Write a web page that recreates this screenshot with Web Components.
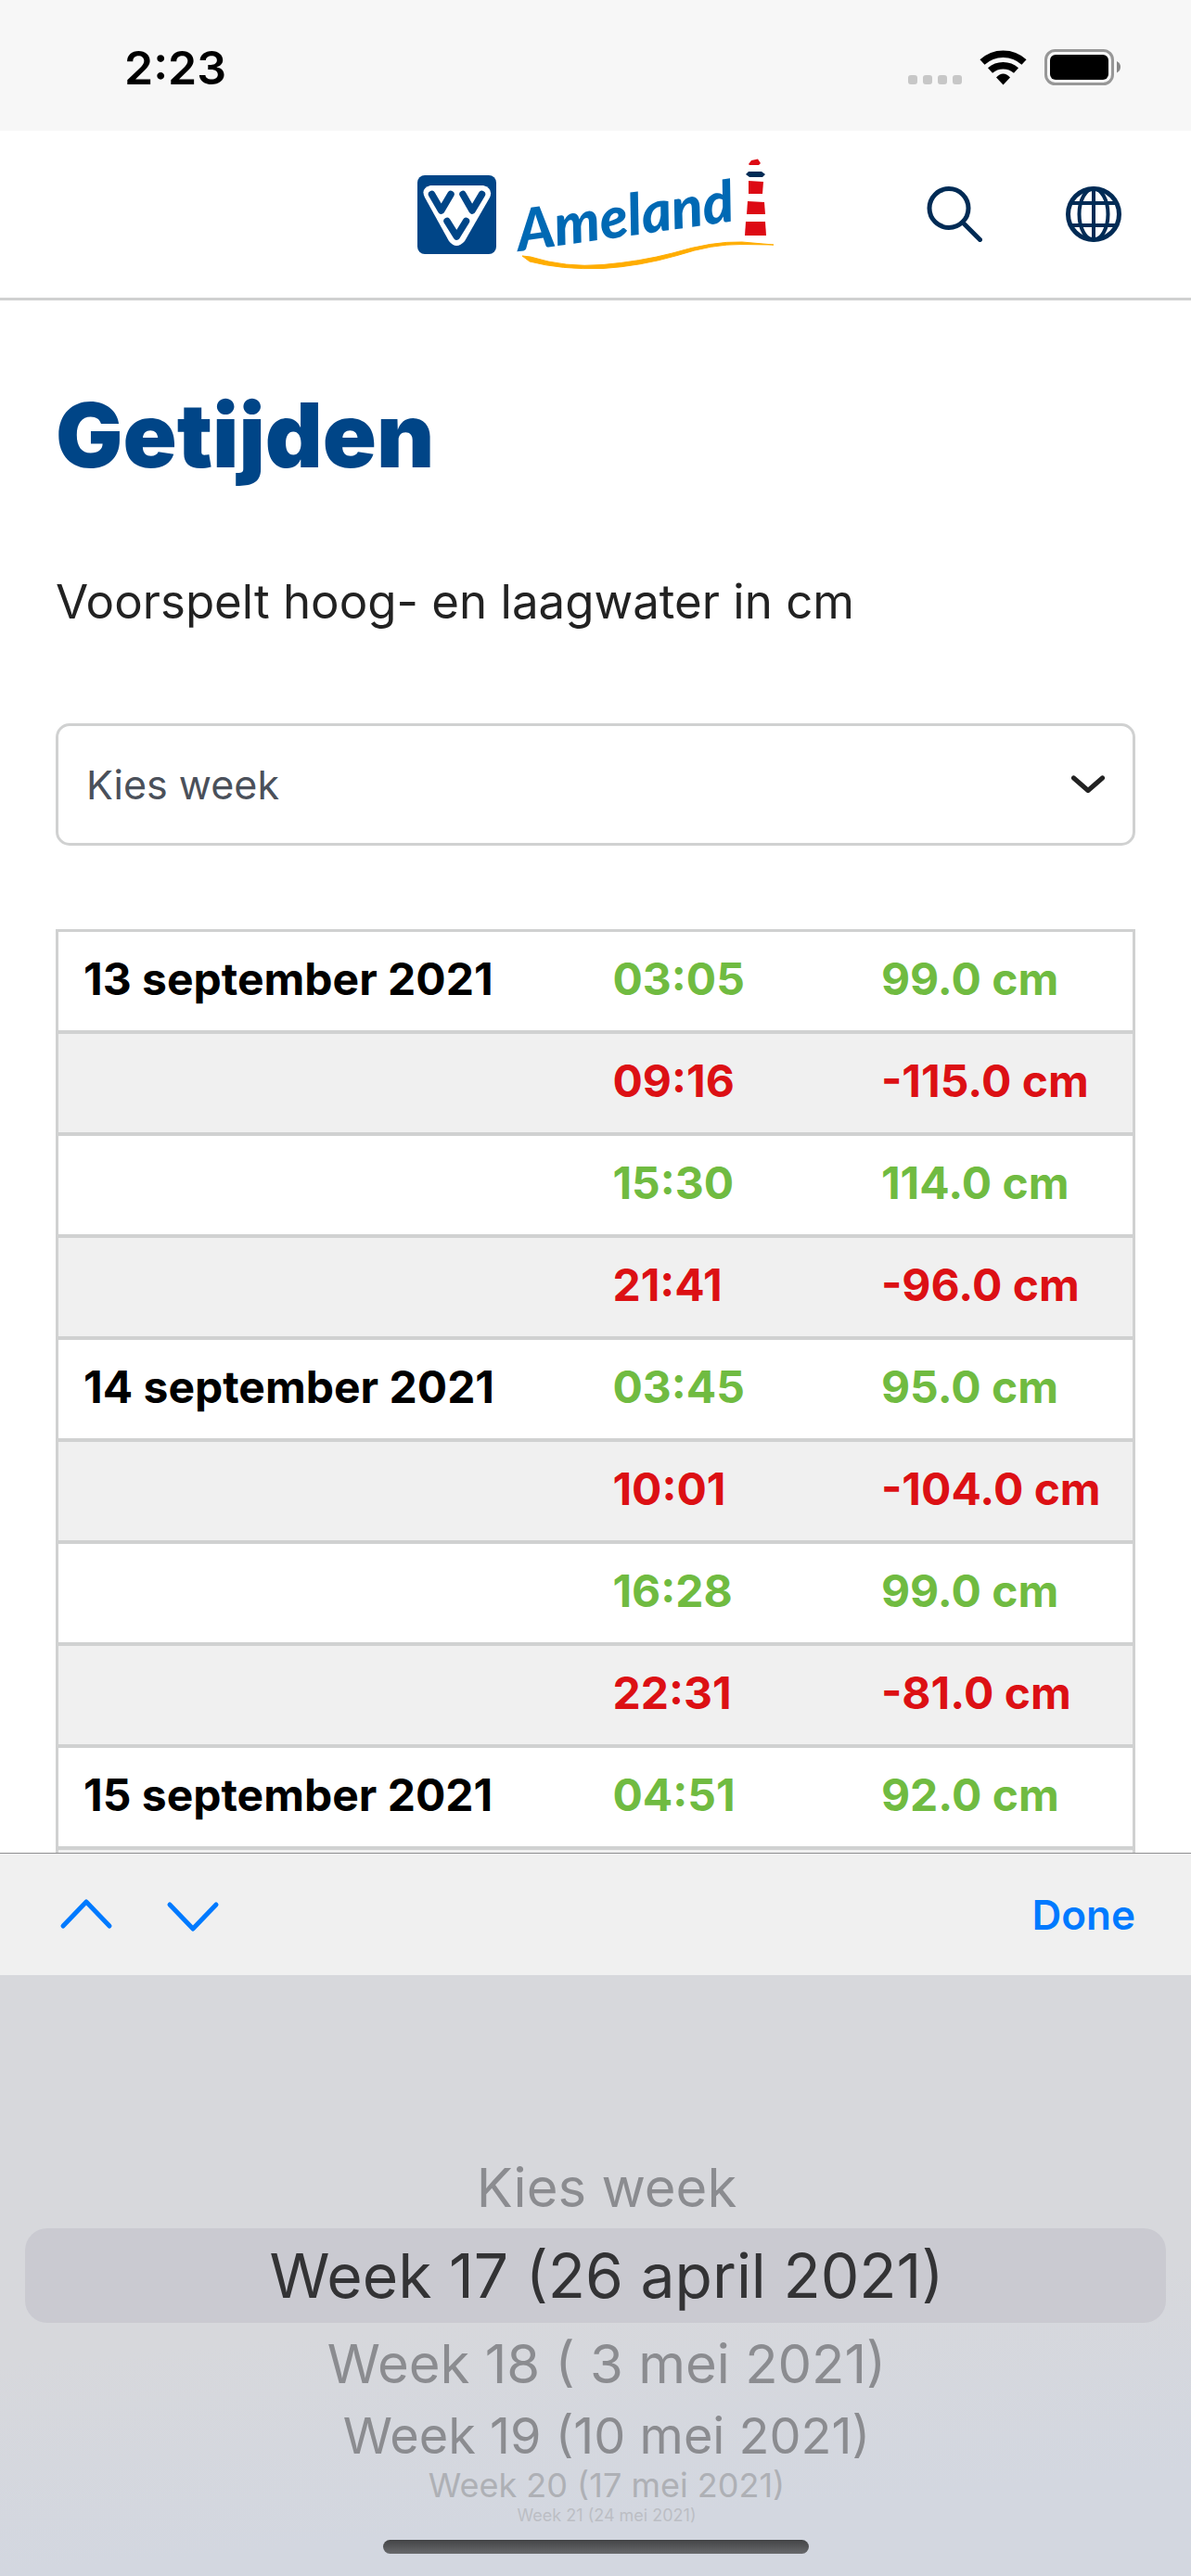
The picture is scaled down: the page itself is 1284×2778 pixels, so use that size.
<!DOCTYPE html>
<html lang="nl">
<head>
<meta charset="utf-8">
<meta name="viewport" content="width=device-width, initial-scale=1">
<title>Getijden</title>
<style>
  html, body { margin: 0; height: 100%; }
  body {
    background: #fff; color: #222;
    font-family: Inter, "Liberation Sans", sans-serif;
    --blue: #004587; --navy: #002b55; --line: #d0d1d1; --ios: #007aff;
    --high: #70bb41; --low: #dc1014; --gutter: 60px;
  }
</style>
</head>
<body>
<tide-app></tide-app>

<script>
const define = (name, html, setup) => {
  const template = document.createElement('template');
  template.innerHTML = html;
  customElements.define(name, class extends HTMLElement {
    constructor() {
      super();
      this.attachShadow({ mode: 'open' }).append(template.content.cloneNode(true));
      if (setup) setup(this.shadowRoot, this);
    }
  });
};

define('status-bar', `
  <style>
    :host { display: flex; justify-content: space-between; align-items: center; height: 141px;
      box-sizing: border-box; padding: 4px 76px 0 134px; background: #f7f7f7; color: #000; }
    time { font-size: 50px; line-height: 60px; font-weight: 600; }
    svg { display: block; }
  </style>
  <time>2:23</time>
  <svg width="229" height="40" viewBox="979 53 229 40" aria-hidden="true">
    <g fill="#c7c7c7"><rect x="979" y="81" width="10" height="10" rx="3"/><rect x="995" y="81" width="10" height="10" rx="3"/><rect x="1011" y="81" width="10" height="10" rx="3"/><rect x="1027" y="81" width="10" height="10" rx="3"/></g>
    <g fill="none" stroke="#000" stroke-width="7.5">
      <path d="M1059 67 A33 33 0 0 1 1104 67"/>
      <path d="M1067.500 76 A21 21 0 0 1 1095.500 76"/>
    </g>
    <path d="M1074 83.500 Q1081.500 75.500 1089 83.500 L1081.500 91.500Z"/>
    <rect x="1127.500" y="54.500" width="72" height="36" rx="10" fill="none" stroke="#979797" stroke-width="3"/>
    <rect x="1132" y="59" width="63" height="27" rx="6"/>
    <path d="M1204 66 Q1208 68 1208 72 Q1208 76.500 1204 78.500Z" fill="#868686"/>
  </svg>`);

define('ameland-logo', `
  <style>:host { display: block; } svg { display: block; }
    text { font-family: Lato, "Liberation Sans", sans-serif; font-size: 62px; font-weight: 900; font-style: italic; }</style>
  <svg width="384" height="120" viewBox="450 171 384 120" role="img" aria-label="VVV Ameland">
    <rect x="450" y="189" width="85" height="85" rx="8" fill="#004587"/>
    <path d="M464 200 H521 Q532 203 528 213 L501 260 Q492 270 484 260 L458 213 Q453 203 464 200Z" fill="#fff"/>
    <path d="M465.500 209.500 L475.700 227 L486 209.500 M499 209.500 L509 227 L519.500 209.500 M482 238.500 L492.300 255 L502.500 238.500" fill="none" stroke="#004587" stroke-width="7.500" stroke-linecap="round" stroke-linejoin="round"/>
    <text x="560" y="271" fill="#0069b4" transform="rotate(-8 560 271)">Ameland</text>
    <path d="M563 276 L572 277 Q610 289 650 285.500 Q690 282 725 273 Q768 260 800 261 L834 264 L800 263.500 Q768 263 730 275.500 Q690 287 650 289.500 Q605 291 571 282Z" fill="#ffad00" stroke="#ffad00"/>
    <g fill="#dd0a14">
      <path d="M807 177 L810 173 L817 171.500 L820 176 L818 178 H808Z"/>
      <path d="M807 195 L823 196 L822 209 L807 209Z"/>
      <path d="M806 217 L824 218 L825 231 L805 231Z"/>
      <path d="M804 239 L825 239 L826 254 L803 254Z"/>
    </g>
    <path d="M807 185 L821 185 L825 188 L822 191 L808 191 L804 188Z" fill="#002b55"/>
  </svg>`);

define('site-header', `
  <style>
    :host { display: grid; grid-template-columns: 1fr auto 1fr; align-items: center; height: 180px;
      padding: 0 75px; border-bottom: 3px solid var(--line); background: #fff; }
    a { grid-column: 2; }
    nav { display: flex; justify-content: flex-end; gap: 90px; }
    button { display: block; padding: 0; border: 0; background: none; color: var(--navy); }
    svg { display: block; width: 60px; height: 60px; fill: none; stroke: currentColor; }
  </style>
  <a href="#" aria-label="Home"><ameland-logo></ameland-logo></a>
  <nav>
    <button aria-label="Zoeken"><svg viewBox="0 0 60 60" stroke-width="5"><circle cx="24" cy="23.500" r="21"/><path d="M39 39 L57.500 57.500" stroke-linecap="round"/></svg></button>
    <button aria-label="Taal"><svg viewBox="0 0 60 60" stroke-width="4"><circle cx="30" cy="30" r="27.500" stroke-width="5"/><ellipse cx="30" cy="30" rx="15.500" ry="27.500"/><path d="M30 2 V58 M5 18 H55 M5 42 H55"/></svg></button>
  </nav>`);

define('week-select', `
  <style>
    :host { display: grid; align-items: center; }
    select, svg { grid-area: 1 / 1; }
    select { appearance: none; width: 100%; height: 132px; box-sizing: border-box; margin: 0; padding: 0 30px;
      border: 3px solid var(--line); border-radius: 15px; background: #fff; color: #4a505a;
      font: 400 43px/60px Inter, "Liberation Sans", sans-serif; }
    svg { justify-self: end; margin-right: 32px; pointer-events: none; }
  </style>
  <select aria-label="Kies week"><option>Kies week</option></select>
  <svg width="38" height="22" viewBox="0 0 38 22" fill="none" stroke="#222" stroke-width="5" stroke-linecap="round" stroke-linejoin="round" aria-hidden="true"><path d="M3.500 4 L19 17.500 L34.500 4"/></svg>`);

const tides = [
  ['13 september 2021', '03:05', '99.0 cm'],
  ['', '09:16', '-115.0 cm'],
  ['', '15:30', '114.0 cm'],
  ['', '21:41', '-96.0 cm'],
  ['14 september 2021', '03:45', '95.0 cm'],
  ['', '10:01', '-104.0 cm'],
  ['', '16:28', '99.0 cm'],
  ['', '22:31', '-81.0 cm'],
  ['15 september 2021', '04:51', '92.0 cm'],
  ['', '', '']
];

define('tide-table', `
  <style>
    :host { display: block; }
    table { width: 100%; table-layout: fixed; border-collapse: separate; border-spacing: 0;
      border: 3px solid var(--line); border-bottom: 0; font-size: 48px; line-height: 60px; font-weight: 700; }
    td { height: 102px; padding: 0 0 4px 30px; border-bottom: 4px solid var(--line); white-space: nowrap; }
    td.day { padding-left: 27px; }
    col.date { width: 49%; } col.time { width: 25%; }
    tr:nth-child(even) { background: #f0f0f0; }
    .day { color: #000; } .high { color: var(--high); } .low { color: var(--low); }
  </style>
  <table><colgroup><col class="date"><col class="time"><col></colgroup><tbody></tbody></table>`,
  root => {
    const body = root.querySelector('tbody');
    for (const [day, time, level] of tides) {
      const tone = level.startsWith('-') ? 'low' : 'high';
      const row = body.insertRow();
      [[day, 'day'], [time, tone], [level, tone]].forEach(([text, name]) => {
        const cell = row.insertCell();
        cell.className = name;
        cell.textContent = text;
      });
    }
  });

define('input-toolbar', `
  <style>
    :host { display: flex; align-items: center; height: 131px; padding: 0 var(--gutter) 0 63px;
      border-top: 1px solid #8f8f91; background: #f0f0f0; color: var(--ios); }
    button { padding: 0; border: 0; background: none; color: inherit; font: 600 44px/60px Inter, "Liberation Sans", sans-serif; }
    .step { margin-right: 55px; }
    .done { margin-left: auto; }
    svg { display: block; fill: none; stroke: currentColor; stroke-width: 5; stroke-linecap: round; stroke-linejoin: round; }
  </style>
  <button class="step" aria-label="Vorige"><svg width="60" height="40" viewBox="0 0 60 40"><path d="M5 32 L30 6 L55 32"/></svg></button>
  <button class="step" aria-label="Volgende"><svg width="60" height="40" viewBox="0 0 60 40"><path d="M5 9 L30 35 L55 9"/></svg></button>
  <button class="done">Done</button>`);

define('wheel-picker', `
  <style>
    :host { display: block; padding: 185px 27px 24px; background: linear-gradient(175deg, #d7d8dc 55%, #d3d7e0 85%); }
    .wheel { display: flex; flex-direction: column; }
    .wheel div { display: flex; align-items: center; justify-content: center; padding-left: 24px; white-space: pre; color: #8b8c90; }
    .near { height: 88px; font-size: 58px; }
    .wheel .current { height: 102px; border-radius: 24px; background: #cacad1; color: #333335; font-size: 66px; }
    .mid { height: 66px; font-size: 54px; }
    .wheel .far { height: 42px; font-size: 36px; color: #aeb0b5; }
    .wheel .edge { height: 24px; font-size: 18px; line-height: 18px; color: #bcbec4; }
    .home { width: 459px; height: 15px; margin: 14px auto 0; border-radius: 8px; background: linear-gradient(#434446, #68696c); }
  </style>
  <div class="wheel" role="listbox" aria-label="Kies week">
    <div role="option" class="near">Kies week</div>
    <div role="option" class="current" aria-selected="true">Week 17 (26 april 2021)</div>
    <div role="option" class="near">Week 18 ( 3 mei 2021)</div>
    <div role="option" class="mid">Week 19 (10 mei 2021)</div>
    <div role="option" class="far">Week 20 (17 mei 2021)</div>
    <div role="option" class="edge">Week 21 (24 mei 2021)</div>
  </div>
  <div class="home"></div>`);

define('tide-page', `
  <style>
    :host { display: block; padding: 95px var(--gutter) 0; }
    h1 { margin: 0 0 94px; font-size: 96px; line-height: 100px; font-weight: 900; color: var(--blue); }
    p { margin: 0 0 95px; font-size: 51px; line-height: 72px; }
    week-select { margin-bottom: 90px; }
  </style>
  <h1><slot name="title"></slot></h1>
  <p><slot name="intro"></slot></p>
  <week-select></week-select>
  <tide-table></tide-table>`);

define('tide-app', `
  <style>
    :host { display: flex; flex-direction: column; height: 100vh; overflow: hidden; }
    main { flex: 1 1 0; min-height: 0; overflow: hidden; }
    status-bar, site-header, footer { flex: none; }
  </style>
  <status-bar></status-bar>
  <site-header></site-header>
  <main>
    <tide-page><span slot="title">Getijden</span><span slot="intro">Voorspelt hoog- en laagwater in cm</span></tide-page>
  </main>
  <footer>
    <input-toolbar></input-toolbar>
    <wheel-picker></wheel-picker>
  </footer>`);
</script>
</body>
</html>
